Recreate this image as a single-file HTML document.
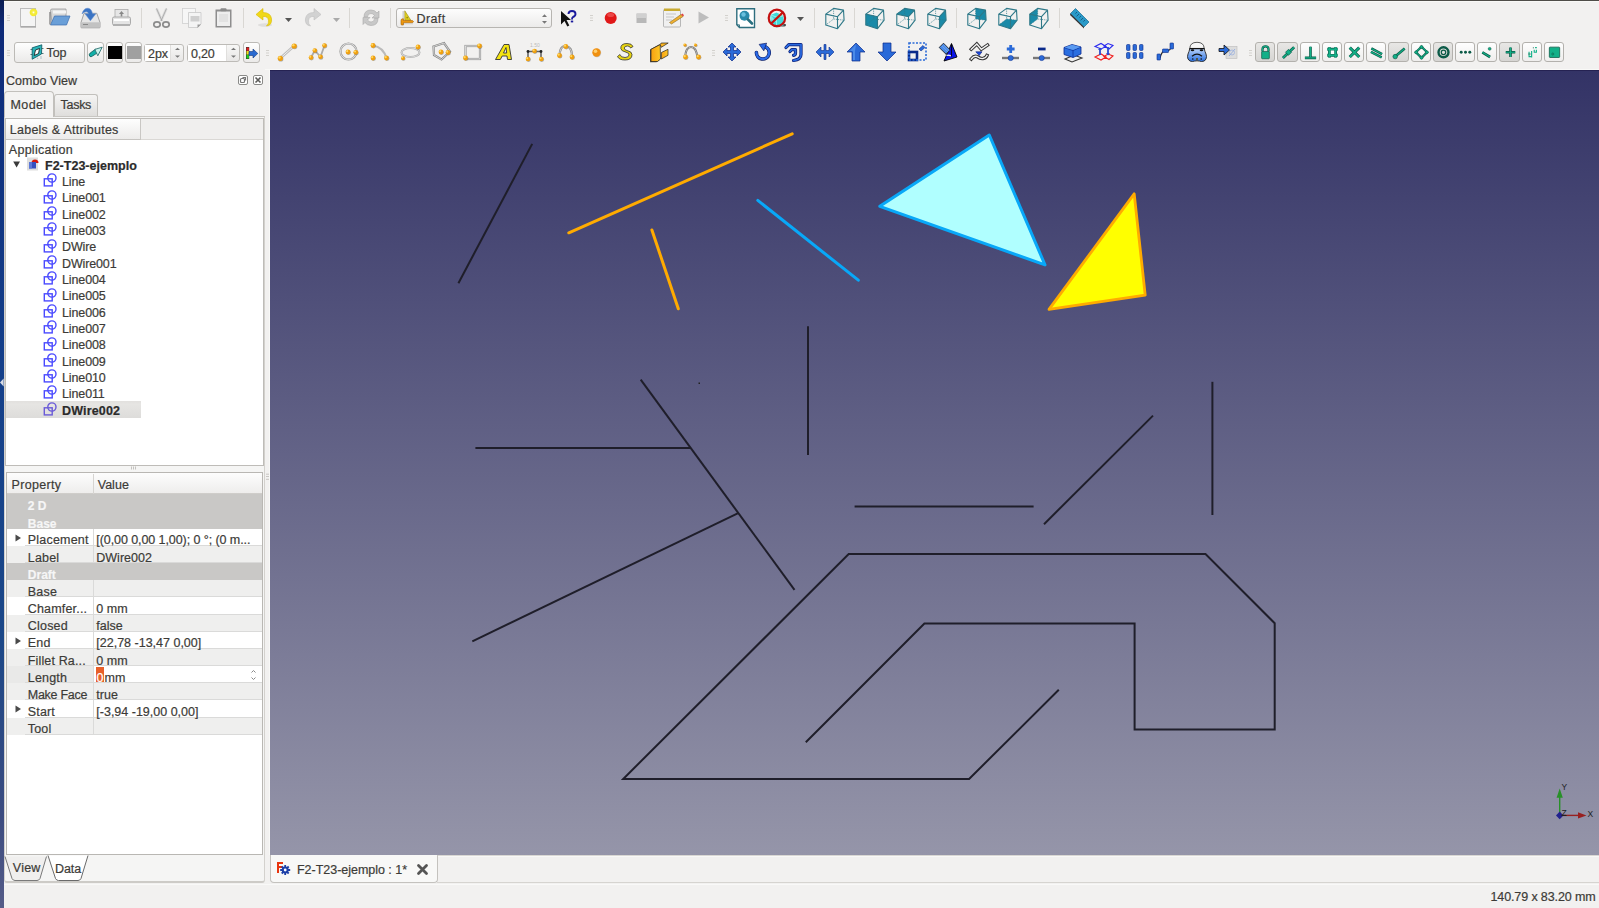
<!DOCTYPE html><html><head><meta charset="utf-8"><style>
*{margin:0;padding:0;box-sizing:border-box}
html,body{width:1599px;height:908px;overflow:hidden;background:#f2f1f0;font-family:"Liberation Sans",sans-serif;color:#3c3c3c;position:relative}
.ab{position:absolute}
.t{position:absolute;white-space:nowrap;-webkit-text-stroke:0.2px currentColor}
svg{position:absolute;overflow:visible}

</style></head><body>
<div class="ab" style="left:0;top:0;width:1599px;height:1px;background:#4f4d49"></div><div class="ab" style="left:4px;top:1px;width:1595px;height:1px;background:#f9f9f7"></div>
<div class="ab" style="left:0;top:0;width:4px;height:908px;background:linear-gradient(#0b1d52,#0e2a78 3%,#143f8a 40%,#1c4888 70%,#3c4c80 90%,#555c88)"></div>
<svg class="ab" style="left:0;top:378px" width="5" height="10"><path d="M3.6 0.5L0 4.5L3.6 8.5z" fill="#d8dce6"/></svg>
<div class="ab" style="left:270px;top:70px;width:1329px;height:785px;background:linear-gradient(#333366,#9595a9)"></div>
<div class="ab" style="left:270px;top:70px;width:1329px;height:1px;background:#252252"></div>
<svg class="ab" width="1599" height="908" style="left:0;top:0"><line x1="458.4" y1="283.2" x2="532.2" y2="143.9" stroke="#1f1e2a" stroke-width="2" stroke-linecap="butt"/><line x1="568.8" y1="232.8" x2="792.2" y2="133.8" stroke="#ffab00" stroke-width="3" stroke-linecap="round"/><line x1="651.9" y1="230" x2="678.3" y2="308.8" stroke="#ffab00" stroke-width="3" stroke-linecap="round"/><line x1="757.8" y1="200.4" x2="858.3" y2="280.2" stroke="#08a8f8" stroke-width="3" stroke-linecap="round"/><line x1="640.7" y1="379.7" x2="794.5" y2="589.8" stroke="#1f1e2a" stroke-width="2" stroke-linecap="butt"/><line x1="475.4" y1="448" x2="690.4" y2="448" stroke="#1f1e2a" stroke-width="2" stroke-linecap="butt"/><line x1="472.3" y1="641.4" x2="738.2" y2="513.1" stroke="#1f1e2a" stroke-width="2" stroke-linecap="butt"/><line x1="808" y1="326.2" x2="808" y2="454.9" stroke="#1f1e2a" stroke-width="2" stroke-linecap="butt"/><line x1="854.6" y1="506.5" x2="1033.6" y2="506.5" stroke="#1f1e2a" stroke-width="2" stroke-linecap="butt"/><line x1="1044" y1="524.2" x2="1153" y2="415.6" stroke="#1f1e2a" stroke-width="2" stroke-linecap="butt"/><line x1="1212.4" y1="381.8" x2="1212.4" y2="515" stroke="#1f1e2a" stroke-width="2" stroke-linecap="butt"/><rect x="698.5" y="382.5" width="1.5" height="1.5" fill="#222"/><polygon points="879.8,206.3 989.3,135 1045,264.9" fill="#b0ffff" stroke="#08a8f8" stroke-width="3" stroke-linejoin="round"/><polygon points="1134.2,193.8 1145.2,295.1 1049,309.4" fill="#ffff00" stroke="#ffab00" stroke-width="2.8" stroke-linejoin="round"/><polyline points="805.8,742.3 924.4,623.6 1134.6,623.6 1134.6,729.6 1274.7,729.6 1274.7,623.2 1205.5,554 848.7,554 623.2,779 969.1,779 1058.8,689.7" fill="none" stroke="#1f1e2a" stroke-width="2"/><line x1="1559.7" y1="813" x2="1559.7" y2="796" stroke="#289028" stroke-width="1.4"/><polygon points="1556.6,797.8 1562.8,797.8 1559.7,788.5" fill="#289028"/><line x1="1562" y1="815.4" x2="1580" y2="815.4" stroke="#982020" stroke-width="1.4"/><polygon points="1578,812.2 1578,818.6 1586.5,815.4" fill="#982020"/><polygon points="1559.7,811.6 1563.4,815.4 1559.7,819.2 1556,815.4" fill="#22228e"/><path d="M1562 815.4H1566" stroke="#111" stroke-width="1"/><text x="1561.6" y="789.5" font-size="8.5" fill="#222" font-family="Liberation Sans">Y</text><text x="1561.6" y="815.5" font-size="8.5" fill="#222" font-family="Liberation Sans">Z</text><text x="1587.6" y="816.5" font-size="8.5" fill="#222" font-family="Liberation Sans">X</text></svg>
<div class="ab" style="left:265px;top:69px;width:1334px;height:1px;background:#f9f9f7"></div>
<div class="ab" style="left:437px;top:855px;width:1162px;height:1px;background:#d9d7d3"></div><div class="ab" style="left:437px;top:856px;width:1162px;height:1px;background:#f8f8f7"></div>
<div class="ab" style="left:270px;top:855px;width:167.5px;height:28px;background:#f8f8f7;border:1px solid #c4c2be;border-top:none;border-radius:0 0 4px 4px"></div>
<svg class="ab" style="left:277px;top:862px" width="14" height="14"><path d="M0 0h6v2h-4v2h3v2h-3v5h-2z" fill="#e8350f"/><g transform="translate(8.2,8)"><circle r="3.4" fill="#1c3fa8"/><path d="M0-5v10M-5 0h10M-3.5-3.5l7 7M3.5-3.5l-7 7" stroke="#1c3fa8" stroke-width="1.8"/><circle r="1.4" fill="#fff"/></g></svg>
<div class="t" style="left:297.00px;top:863.92px;font-size:12.5px;line-height:12.5px;letter-spacing:-0.024px;font-weight:normal;color:#3c3b37;">F2-T23-ejemplo : 1*</div>
<svg class="ab" style="left:417px;top:864px" width="11" height="11"><path d="M1.5 1.5l8 8M9.5 1.5l-8 8" stroke="#555" stroke-width="2.8" stroke-linecap="round"/></svg>
<div class="ab" style="left:437px;top:882px;width:1162px;height:1px;background:#d6d4d0"></div><div class="ab" style="left:4px;top:884px;width:1595px;height:1px;background:#f9f9f8"></div>
<div class="t" style="left:1490.50px;top:890.92px;font-size:12.5px;line-height:12.5px;letter-spacing:-0.118px;font-weight:normal;color:#3c3b37;">140.79 x 83.20 mm</div>
<div class="t" style="left:6.00px;top:75.42px;font-size:12.5px;line-height:12.5px;letter-spacing:0.037px;font-weight:normal;color:#3c3b37;">Combo View</div>
<svg class="ab" style="left:238px;top:75px" width="26" height="11"><rect x="0.5" y="0.5" width="9" height="9" rx="1.5" fill="#fff" stroke="#8a8a88"/><rect x="2.5" y="3.5" width="4" height="4" rx="1" fill="none" stroke="#777" stroke-width="1.2"/><path d="M4.5 2.5h3v3" fill="none" stroke="#777" stroke-width="1.2"/><rect x="15.5" y="0.5" width="9" height="9" rx="1.5" fill="#fff" stroke="#8a8a88"/><path d="M17.5 2.5l5 5M22.5 2.5l-5 5" stroke="#5a5a58" stroke-width="1.6"/></svg>
<div class="ab" style="left:54px;top:94px;width:44px;height:23px;background:linear-gradient(#f5f4f3,#dedddb);border:1px solid #c2c0bc;border-bottom:none;border-radius:3px 3px 0 0"></div>
<div class="ab" style="left:4px;top:91px;width:50px;height:27px;background:#f4f3f2;border:1px solid #c2c0bc;border-bottom:none;border-radius:4px 4px 0 0"></div>
<div class="ab" style="left:54px;top:116px;width:211px;height:1px;background:#c8c6c2"></div>
<div class="t" style="left:10.50px;top:99.42px;font-size:12.5px;line-height:12.5px;letter-spacing:0.391px;font-weight:normal;color:#3c3b37;">Model</div>
<div class="t" style="left:60.50px;top:98.62px;font-size:12.5px;line-height:12.5px;letter-spacing:-0.270px;font-weight:normal;color:#3c3b37;">Tasks</div>
<div class="ab" style="left:4px;top:117px;width:261px;height:766px;border:1px solid #d3d1cd;border-top:none;border-bottom:2px solid #cdcbc7;border-radius:0 0 3px 3px;background:#f5f5f4"></div>
<div class="ab" style="left:5px;top:118px;width:259px;height:348px;background:#fff;border:1px solid #bebcb8"></div>
<div class="ab" style="left:6px;top:119px;width:257px;height:21px;background:#f0efee;border-bottom:1px solid #dad8d5"></div>
<div class="ab" style="left:6px;top:119px;width:135px;height:21px;background:linear-gradient(#fefefe,#ecebea);border-right:1px solid #c9c7c4;border-bottom:1px solid #c6c4c1"></div>
<div class="t" style="left:9.80px;top:124.42px;font-size:12.5px;line-height:12.5px;letter-spacing:0.241px;font-weight:normal;color:#3c3b37;">Labels &amp; Attributes</div>
<div class="t" style="left:8.80px;top:144.02px;font-size:12.5px;line-height:12.5px;letter-spacing:0.277px;font-weight:normal;color:#3c3b37;">Application</div>
<svg class="ab" style="left:13px;top:161px" width="8" height="7"><path d="M0.2 0.6h6.8l-3.4 5.8z" fill="#3a3a3a"/></svg>
<svg class="ab" style="left:27px;top:157px" width="12" height="14"><rect x="0" y="0.5" width="11" height="13" fill="#dedede"/><path d="M4.5 6a3.5 3.5 0 0 1 7 0z" fill="#d8180e"/><rect x="2" y="5" width="7" height="6.5" fill="#3650c0"/><rect x="2" y="5" width="3" height="6.5" fill="#5c78d8"/></svg>
<div class="t" style="left:45.00px;top:160.42px;font-size:12.5px;line-height:12.5px;letter-spacing:0.009px;font-weight:bold;color:#2b2b2b;">F2-T23-ejemplo</div>
<div class="t" style="left:62.00px;top:176.12px;font-size:12.5px;line-height:12.5px;letter-spacing:-0.117px;font-weight:normal;color:#3c3b37;">Line</div>
<svg class="ab" style="left:43px;top:173.20px" width="15" height="15"><rect x="1.3" y="5.8" width="7.9" height="7.1" fill="none" stroke="#4a4aff" stroke-width="1.4"/><circle cx="8.9" cy="5" r="4.1" fill="none" stroke="#4a4aff" stroke-width="1.4"/></svg>
<div class="t" style="left:62.00px;top:192.45px;font-size:12.5px;line-height:12.5px;letter-spacing:-0.126px;font-weight:normal;color:#3c3b37;">Line001</div>
<svg class="ab" style="left:43px;top:189.53px" width="15" height="15"><rect x="1.3" y="5.8" width="7.9" height="7.1" fill="none" stroke="#4a4aff" stroke-width="1.4"/><circle cx="8.9" cy="5" r="4.1" fill="none" stroke="#4a4aff" stroke-width="1.4"/></svg>
<div class="t" style="left:62.00px;top:208.78px;font-size:12.5px;line-height:12.5px;letter-spacing:-0.126px;font-weight:normal;color:#3c3b37;">Line002</div>
<svg class="ab" style="left:43px;top:205.86px" width="15" height="15"><rect x="1.3" y="5.8" width="7.9" height="7.1" fill="none" stroke="#4a4aff" stroke-width="1.4"/><circle cx="8.9" cy="5" r="4.1" fill="none" stroke="#4a4aff" stroke-width="1.4"/></svg>
<div class="t" style="left:62.00px;top:225.11px;font-size:12.5px;line-height:12.5px;letter-spacing:-0.126px;font-weight:normal;color:#3c3b37;">Line003</div>
<svg class="ab" style="left:43px;top:222.19px" width="15" height="15"><rect x="1.3" y="5.8" width="7.9" height="7.1" fill="none" stroke="#4a4aff" stroke-width="1.4"/><circle cx="8.9" cy="5" r="4.1" fill="none" stroke="#4a4aff" stroke-width="1.4"/></svg>
<div class="t" style="left:62.00px;top:241.44px;font-size:12.5px;line-height:12.5px;letter-spacing:-0.138px;font-weight:normal;color:#3c3b37;">DWire</div>
<svg class="ab" style="left:43px;top:238.52px" width="15" height="15"><rect x="1.3" y="5.8" width="7.9" height="7.1" fill="none" stroke="#4a4aff" stroke-width="1.4"/><circle cx="8.9" cy="5" r="4.1" fill="none" stroke="#4a4aff" stroke-width="1.4"/></svg>
<div class="t" style="left:62.00px;top:257.77px;font-size:12.5px;line-height:12.5px;letter-spacing:-0.138px;font-weight:normal;color:#3c3b37;">DWire001</div>
<svg class="ab" style="left:43px;top:254.85px" width="15" height="15"><rect x="1.3" y="5.8" width="7.9" height="7.1" fill="none" stroke="#4a4aff" stroke-width="1.4"/><circle cx="8.9" cy="5" r="4.1" fill="none" stroke="#4a4aff" stroke-width="1.4"/></svg>
<div class="t" style="left:62.00px;top:274.10px;font-size:12.5px;line-height:12.5px;letter-spacing:-0.126px;font-weight:normal;color:#3c3b37;">Line004</div>
<svg class="ab" style="left:43px;top:271.18px" width="15" height="15"><rect x="1.3" y="5.8" width="7.9" height="7.1" fill="none" stroke="#4a4aff" stroke-width="1.4"/><circle cx="8.9" cy="5" r="4.1" fill="none" stroke="#4a4aff" stroke-width="1.4"/></svg>
<div class="t" style="left:62.00px;top:290.43px;font-size:12.5px;line-height:12.5px;letter-spacing:-0.126px;font-weight:normal;color:#3c3b37;">Line005</div>
<svg class="ab" style="left:43px;top:287.51px" width="15" height="15"><rect x="1.3" y="5.8" width="7.9" height="7.1" fill="none" stroke="#4a4aff" stroke-width="1.4"/><circle cx="8.9" cy="5" r="4.1" fill="none" stroke="#4a4aff" stroke-width="1.4"/></svg>
<div class="t" style="left:62.00px;top:306.76px;font-size:12.5px;line-height:12.5px;letter-spacing:-0.126px;font-weight:normal;color:#3c3b37;">Line006</div>
<svg class="ab" style="left:43px;top:303.84px" width="15" height="15"><rect x="1.3" y="5.8" width="7.9" height="7.1" fill="none" stroke="#4a4aff" stroke-width="1.4"/><circle cx="8.9" cy="5" r="4.1" fill="none" stroke="#4a4aff" stroke-width="1.4"/></svg>
<div class="t" style="left:62.00px;top:323.09px;font-size:12.5px;line-height:12.5px;letter-spacing:-0.126px;font-weight:normal;color:#3c3b37;">Line007</div>
<svg class="ab" style="left:43px;top:320.17px" width="15" height="15"><rect x="1.3" y="5.8" width="7.9" height="7.1" fill="none" stroke="#4a4aff" stroke-width="1.4"/><circle cx="8.9" cy="5" r="4.1" fill="none" stroke="#4a4aff" stroke-width="1.4"/></svg>
<div class="t" style="left:62.00px;top:339.42px;font-size:12.5px;line-height:12.5px;letter-spacing:-0.126px;font-weight:normal;color:#3c3b37;">Line008</div>
<svg class="ab" style="left:43px;top:336.50px" width="15" height="15"><rect x="1.3" y="5.8" width="7.9" height="7.1" fill="none" stroke="#4a4aff" stroke-width="1.4"/><circle cx="8.9" cy="5" r="4.1" fill="none" stroke="#4a4aff" stroke-width="1.4"/></svg>
<div class="t" style="left:62.00px;top:355.75px;font-size:12.5px;line-height:12.5px;letter-spacing:-0.126px;font-weight:normal;color:#3c3b37;">Line009</div>
<svg class="ab" style="left:43px;top:352.83px" width="15" height="15"><rect x="1.3" y="5.8" width="7.9" height="7.1" fill="none" stroke="#4a4aff" stroke-width="1.4"/><circle cx="8.9" cy="5" r="4.1" fill="none" stroke="#4a4aff" stroke-width="1.4"/></svg>
<div class="t" style="left:62.00px;top:372.08px;font-size:12.5px;line-height:12.5px;letter-spacing:-0.126px;font-weight:normal;color:#3c3b37;">Line010</div>
<svg class="ab" style="left:43px;top:369.16px" width="15" height="15"><rect x="1.3" y="5.8" width="7.9" height="7.1" fill="none" stroke="#4a4aff" stroke-width="1.4"/><circle cx="8.9" cy="5" r="4.1" fill="none" stroke="#4a4aff" stroke-width="1.4"/></svg>
<div class="t" style="left:62.00px;top:388.41px;font-size:12.5px;line-height:12.5px;letter-spacing:-0.124px;font-weight:normal;color:#3c3b37;">Line011</div>
<svg class="ab" style="left:43px;top:385.49px" width="15" height="15"><rect x="1.3" y="5.8" width="7.9" height="7.1" fill="none" stroke="#4a4aff" stroke-width="1.4"/><circle cx="8.9" cy="5" r="4.1" fill="none" stroke="#4a4aff" stroke-width="1.4"/></svg>
<div class="ab" style="left:6px;top:401px;width:135px;height:17px;background:linear-gradient(#e2e0de,#e6e5e3 20%,#dddcda)"></div>
<div class="t" style="left:62.00px;top:404.74px;font-size:12.5px;line-height:12.5px;letter-spacing:0.168px;font-weight:bold;color:#2b2b2b;">DWire002</div>
<svg class="ab" style="left:43px;top:401.82px" width="15" height="15"><rect x="1.3" y="5.8" width="7.9" height="7.1" fill="none" stroke="#6a5ad8" stroke-width="1.4"/><circle cx="8.9" cy="5" r="4.1" fill="none" stroke="#6a5ad8" stroke-width="1.4"/></svg>
<svg class="ab" style="left:266px;top:473px" width="4" height="8"><path d="M0 1.2h3M0 3.5h3M0 6.3h3" stroke="#c8c6c2" stroke-width="1"/></svg>
<div class="ab" style="left:269px;top:70px;width:1px;height:785px;background:#f8f8f6"></div>
<svg class="ab" style="left:130px;top:466px" width="8" height="5"><path d="M1.5 0.5v3M3.5 0.5v3M5.5 0.5v3" stroke="#c4c2bf" stroke-width="1"/></svg>
<div class="ab" style="left:6px;top:472px;width:257px;height:383px;background:#fff;border:1px solid #b9b7b3"></div>
<div class="ab" style="left:7px;top:473px;width:255px;height:21.4px;background:linear-gradient(#fdfdfd,#eeedec);border-bottom:1px solid #cfcdca"></div>
<div class="ab" style="left:93px;top:474px;width:1px;height:20px;background:#d6d4d1"></div>
<div class="t" style="left:11.60px;top:479.42px;font-size:12.5px;line-height:12.5px;letter-spacing:0.308px;font-weight:normal;color:#3c3b37;">Property</div>
<div class="t" style="left:97.70px;top:479.42px;font-size:12.5px;line-height:12.5px;letter-spacing:0.032px;font-weight:normal;color:#3c3b37;">Value</div>
<div class="ab" style="left:7px;top:494px;width:255px;height:17px;background:#c9c8c6"></div>
<div class="ab" style="left:7px;top:511px;width:255px;height:18px;background:#c9c8c6"></div>
<div class="ab" style="left:7px;top:529px;width:255px;height:17px;background:#ffffff"></div>
<div class="ab" style="left:7px;top:546px;width:255px;height:17px;background:#efefee"></div>
<div class="ab" style="left:7px;top:563px;width:255px;height:17px;background:#c9c8c6"></div>
<div class="ab" style="left:7px;top:580px;width:255px;height:17px;background:#efefee"></div>
<div class="ab" style="left:7px;top:597px;width:255px;height:18px;background:#ffffff"></div>
<div class="ab" style="left:7px;top:615px;width:255px;height:17px;background:#efefee"></div>
<div class="ab" style="left:7px;top:632px;width:255px;height:17px;background:#ffffff"></div>
<div class="ab" style="left:7px;top:649px;width:255px;height:17px;background:#efefee"></div>
<div class="ab" style="left:7px;top:666px;width:255px;height:17px;background:#e9e9e8"></div>
<div class="ab" style="left:94px;top:666px;width:168px;height:17px;background:#fff"></div>
<div class="ab" style="left:7px;top:683px;width:255px;height:17px;background:#efefee"></div>
<div class="ab" style="left:7px;top:700px;width:255px;height:18px;background:#ffffff"></div>
<div class="ab" style="left:7px;top:718px;width:255px;height:17px;background:#efefee"></div>
<div class="ab" style="left:25px;top:545px;width:237px;height:1px;background:#dadad9"></div>
<div class="ab" style="left:93px;top:529px;width:1px;height:17px;background:#dadad9"></div>
<div class="ab" style="left:25px;top:562px;width:237px;height:1px;background:#dadad9"></div>
<div class="ab" style="left:93px;top:546px;width:1px;height:17px;background:#dadad9"></div>
<div class="ab" style="left:25px;top:596px;width:237px;height:1px;background:#dadad9"></div>
<div class="ab" style="left:93px;top:580px;width:1px;height:17px;background:#dadad9"></div>
<div class="ab" style="left:25px;top:614px;width:237px;height:1px;background:#dadad9"></div>
<div class="ab" style="left:93px;top:597px;width:1px;height:18px;background:#dadad9"></div>
<div class="ab" style="left:25px;top:631px;width:237px;height:1px;background:#dadad9"></div>
<div class="ab" style="left:93px;top:615px;width:1px;height:17px;background:#dadad9"></div>
<div class="ab" style="left:25px;top:648px;width:237px;height:1px;background:#dadad9"></div>
<div class="ab" style="left:93px;top:632px;width:1px;height:17px;background:#dadad9"></div>
<div class="ab" style="left:25px;top:665px;width:237px;height:1px;background:#dadad9"></div>
<div class="ab" style="left:93px;top:649px;width:1px;height:17px;background:#dadad9"></div>
<div class="ab" style="left:25px;top:682px;width:237px;height:1px;background:#dadad9"></div>
<div class="ab" style="left:93px;top:666px;width:1px;height:17px;background:#dadad9"></div>
<div class="ab" style="left:25px;top:699px;width:237px;height:1px;background:#dadad9"></div>
<div class="ab" style="left:93px;top:683px;width:1px;height:17px;background:#dadad9"></div>
<div class="ab" style="left:25px;top:717px;width:237px;height:1px;background:#dadad9"></div>
<div class="ab" style="left:93px;top:700px;width:1px;height:18px;background:#dadad9"></div>
<div class="ab" style="left:25px;top:734px;width:237px;height:1px;background:#dadad9"></div>
<div class="ab" style="left:93px;top:718px;width:1px;height:17px;background:#dadad9"></div>
<div class="t" style="left:27.80px;top:500.34px;font-size:12px;line-height:12px;letter-spacing:0.000px;font-weight:bold;color:#f6f6f6;">2 D</div>
<div class="t" style="left:27.80px;top:517.52px;font-size:12px;line-height:12px;letter-spacing:0.000px;font-weight:bold;color:#f6f6f6;">Base</div>
<svg class="ab" style="left:15px;top:533.66px" width="7" height="8"><path d="M0.5 0.5l5.5 3.5l-5.5 3.5z" fill="#4a4a4a"/></svg>
<div class="t" style="left:27.80px;top:534.38px;font-size:12.5px;line-height:12.5px;letter-spacing:0.197px;font-weight:normal;color:#3c3b37;">Placement</div>
<div class="t" style="left:96.30px;top:534.38px;font-size:12.5px;line-height:12.5px;letter-spacing:-0.079px;font-weight:normal;color:#3c3b37;">[(0,00 0,00 1,00); 0 °; (0 m...</div>
<div class="t" style="left:27.80px;top:551.56px;font-size:12.5px;line-height:12.5px;letter-spacing:0.183px;font-weight:normal;color:#3c3b37;">Label</div>
<div class="t" style="left:96.30px;top:551.56px;font-size:12.5px;line-height:12.5px;letter-spacing:0.000px;font-weight:normal;color:#3c3b37;">DWire002</div>
<div class="t" style="left:27.80px;top:569.06px;font-size:12px;line-height:12px;letter-spacing:0.000px;font-weight:bold;color:#f6f6f6;">Draft</div>
<div class="t" style="left:27.80px;top:585.92px;font-size:12.5px;line-height:12.5px;letter-spacing:0.214px;font-weight:normal;color:#3c3b37;">Base</div>
<div class="t" style="left:27.80px;top:603.10px;font-size:12.5px;line-height:12.5px;letter-spacing:0.173px;font-weight:normal;color:#3c3b37;">Chamfer...</div>
<div class="t" style="left:96.30px;top:603.10px;font-size:12.5px;line-height:12.5px;letter-spacing:0.000px;font-weight:normal;color:#3c3b37;">0 mm</div>
<div class="t" style="left:27.80px;top:620.28px;font-size:12.5px;line-height:12.5px;letter-spacing:0.195px;font-weight:normal;color:#3c3b37;">Closed</div>
<div class="t" style="left:96.30px;top:620.28px;font-size:12.5px;line-height:12.5px;letter-spacing:0.000px;font-weight:normal;color:#3c3b37;">false</div>
<svg class="ab" style="left:15px;top:636.74px" width="7" height="8"><path d="M0.5 0.5l5.5 3.5l-5.5 3.5z" fill="#4a4a4a"/></svg>
<div class="t" style="left:27.80px;top:637.46px;font-size:12.5px;line-height:12.5px;letter-spacing:0.222px;font-weight:normal;color:#3c3b37;">End</div>
<div class="t" style="left:96.30px;top:637.46px;font-size:12.5px;line-height:12.5px;letter-spacing:0.000px;font-weight:normal;color:#3c3b37;">[22,78 -13,47 0,00]</div>
<div class="t" style="left:27.80px;top:654.64px;font-size:12.5px;line-height:12.5px;letter-spacing:0.141px;font-weight:normal;color:#3c3b37;">Fillet Ra...</div>
<div class="t" style="left:96.30px;top:654.64px;font-size:12.5px;line-height:12.5px;letter-spacing:0.000px;font-weight:normal;color:#3c3b37;">0 mm</div>
<div class="t" style="left:27.80px;top:671.82px;font-size:12.5px;line-height:12.5px;letter-spacing:0.191px;font-weight:normal;color:#3c3b37;">Length</div>
<div class="ab" style="left:96px;top:667px;width:8px;height:15px;background:#e8602a"></div>
<div class="t" style="left:96.60px;top:671.82px;font-size:12.5px;line-height:12.5px;letter-spacing:0.000px;font-weight:normal;color:#fff;">0</div>
<div class="t" style="left:104.50px;top:671.82px;font-size:12.5px;line-height:12.5px;letter-spacing:0.000px;font-weight:normal;color:#3c3b37;">mm</div>
<svg class="ab" style="left:250px;top:669.10px" width="7" height="12"><path d="M1.5 3.5l2-2l2 2M1.5 8.5l2 2l2-2" fill="none" stroke="#888" stroke-width="1"/></svg>
<div class="t" style="left:27.80px;top:689.00px;font-size:12.5px;line-height:12.5px;letter-spacing:-0.275px;font-weight:normal;color:#3c3b37;">Make Face</div>
<div class="t" style="left:96.30px;top:689.00px;font-size:12.5px;line-height:12.5px;letter-spacing:0.000px;font-weight:normal;color:#3c3b37;">true</div>
<svg class="ab" style="left:15px;top:705.46px" width="7" height="8"><path d="M0.5 0.5l5.5 3.5l-5.5 3.5z" fill="#4a4a4a"/></svg>
<div class="t" style="left:27.80px;top:706.18px;font-size:12.5px;line-height:12.5px;letter-spacing:0.158px;font-weight:normal;color:#3c3b37;">Start</div>
<div class="t" style="left:96.30px;top:706.18px;font-size:12.5px;line-height:12.5px;letter-spacing:0.000px;font-weight:normal;color:#3c3b37;">[-3,94 -19,00 0,00]</div>
<div class="t" style="left:27.80px;top:723.36px;font-size:12.5px;line-height:12.5px;letter-spacing:0.172px;font-weight:normal;color:#3c3b37;">Tool</div>
<svg class="ab" style="left:0px;top:853px" width="100" height="32"><path d="M5 3.5L12 25.5Q13 27.5 15 27.5H37Q39 27.5 40 25.5L46.5 3.5" fill="#f0efee" stroke="#7a7a7a" stroke-width="1"/><path d="M48 2.5L55.5 25.5Q56.5 27.5 58.5 27.5H78Q80 27.5 81 25.5L88 2.5" fill="#ffffff" stroke="#6a6a6a" stroke-width="1"/></svg>
<div class="t" style="left:12.80px;top:862.02px;font-size:12.5px;line-height:12.5px;letter-spacing:0.233px;font-weight:normal;color:#3c3b37;">View</div>
<div class="t" style="left:55.00px;top:863.02px;font-size:12.5px;line-height:12.5px;letter-spacing:-0.101px;font-weight:normal;color:#3c3b37;">Data</div>
<svg class="ab" style="left:7px;top:15px" width="5" height="9"><path d="M0 0.5h3M0 3h3M0 5.5h3" stroke="#d3d1cd" stroke-width="1"/></svg>
<svg class="ab" style="left:20px;top:8px" width="22" height="22" viewBox="0 0 22 22"><rect x="0.5" y="0.5" width="15" height="18.5" fill="#f4f4f4" stroke="#bdbdbd"/><rect x="1" y="18" width="15" height="1.5" fill="#aaa"/><defs><radialGradient id="gstar"><stop offset="0" stop-color="#fffef0"/><stop offset="0.35" stop-color="#f6ee40"/><stop offset="0.75" stop-color="#f2e830"/><stop offset="1" stop-color="#f2e830" stop-opacity="0"/></radialGradient></defs><circle cx="13.5" cy="4.4" r="4.4" fill="url(#gstar)"/></svg>
<svg class="ab" style="left:49px;top:8px" width="22" height="22" viewBox="0 0 22 22"><path d="M1.5 2.5 Q1.5 1 3 1h14v14H3z" fill="#d8d8d8" stroke="#9a9a9a" stroke-width="0.8"/><rect x="4" y="2.5" width="13" height="3" fill="#f4f4f4"/><path d="M1.5 17L5.5 8H21L17.5 17z" fill="#6a9fd8" stroke="#3c6fb0" stroke-width="0.7"/><path d="M1 16.5V4" stroke="#777" stroke-width="1.2"/></svg>
<svg class="ab" style="left:78px;top:5px" width="25" height="25" viewBox="0 0 25 25"><path d="M6 8.3H18.8L22 17.5V22.3Q22 22.8 21.5 22.8H3.5Q3 22.8 3 22.3V17.5z" fill="#e6e6e6" stroke="#9a9a9a" stroke-width="0.9"/><rect x="3.5" y="17.3" width="18" height="5" fill="#c2c2c2"/><path d="M5 19.5H10" stroke="#888" stroke-width="1"/><path d="M4 9Q5.5 3 10 3.2Q13.5 3.5 14.5 8.8H17.8L12.4 15.8L7 8.8H10.6Q10 6.5 8 6.8Q5.5 7 4 9z" fill="#3a74c4" stroke="#5a8ad0" stroke-width="0.5"/></svg>
<svg class="ab" style="left:112px;top:9px" width="22" height="22" viewBox="0 0 22 22"><rect x="3" y="0.5" width="13" height="8" fill="#e6e6e6" stroke="#aaa" stroke-width="0.8"/><path d="M9.5 2L7 5h5z" fill="#888"/><rect x="8.7" y="4.5" width="1.6" height="3" fill="#888"/><rect x="0.5" y="8" width="18" height="8" rx="1.5" fill="#e4e4e4" stroke="#9a9a9a" stroke-width="0.8"/><rect x="2" y="10" width="15" height="2" fill="#fff"/><rect x="1" y="15" width="17" height="2" fill="#b0b0b0"/></svg>
<div class="ab" style="left:141px;top:8px;width:1px;height:20px;background:#d9d7d3"></div>
<svg class="ab" style="left:153px;top:8px" width="22" height="22" viewBox="0 0 22 22"><path d="M3.5 0.5L9 13M13.5 0.5L8 13" stroke="#dcdcdc" stroke-width="2.6"/><path d="M3.5 0.5L9 13M13.5 0.5L8 13" stroke="#9a9a9a" stroke-width="0.7" fill="none"/><ellipse cx="4" cy="16.5" rx="3.2" ry="2.6" fill="none" stroke="#8c8c8c" stroke-width="1.7"/><ellipse cx="13" cy="16.5" rx="3.2" ry="2.6" fill="none" stroke="#8c8c8c" stroke-width="1.7"/></svg>
<svg class="ab" style="left:182px;top:8px" width="22" height="22" viewBox="0 0 22 22"><rect x="0.5" y="0.5" width="13" height="15" fill="#f6f6f6" stroke="#d0d0d0" stroke-width="0.8"/><path d="M6.5 4.5h12.5v11.5l-3.5 3.5h-9z" fill="#f4f4f4" stroke="#c8c8c8" stroke-width="0.8"/><rect x="8.5" y="8" width="9" height="5.5" fill="#cfcfcf"/><path d="M15.5 20v-3.5h3.5" fill="#999"/></svg>
<svg class="ab" style="left:215px;top:8px" width="22" height="22" viewBox="0 0 22 22"><rect x="0.5" y="1.5" width="16" height="18" fill="#8e8e8e"/><rect x="2" y="3.5" width="13" height="14.5" fill="#eeeeee"/><rect x="5.5" y="0.3" width="6" height="3" rx="1" fill="#8a8a8a"/><rect x="4" y="6" width="9" height="8" fill="#e2e2e2"/></svg>
<div class="ab" style="left:243px;top:8px;width:1px;height:20px;background:#d9d7d3"></div>
<svg class="ab" style="left:256px;top:8px" width="22" height="22" viewBox="0 0 22 22"><ellipse cx="9" cy="17" rx="7" ry="1.8" fill="#000" opacity="0.08"/><path d="M7 0.5L0 6.5L7 12V8.5Q12 8 12.5 12.5Q13 16 10.5 18Q16.5 17 15.5 10.5Q14.5 4.5 7 4.5z" fill="#f0d818" stroke="#d8b800" stroke-width="0.6"/></svg>
<svg class="ab" style="left:285px;top:17.5px" width="8" height="5" viewBox="0 0 8 5"><path d="M0 0h7l-3.5 4z" fill="#555"/></svg>
<svg class="ab" style="left:305px;top:8px" width="22" height="22" viewBox="0 0 22 22"><path d="M9 0.5L16 6.5L9 12V8.5Q4 8 3.5 12.5Q3 16 5.5 18Q-0.5 17 0.5 10.5Q1.5 4.5 9 4.5z" fill="#d2d2d2" stroke="#c0c0c0" stroke-width="0.6"/></svg>
<svg class="ab" style="left:333px;top:17.5px" width="8" height="5" viewBox="0 0 8 5"><path d="M0 0h7l-3.5 4z" fill="#aaa"/></svg>
<div class="ab" style="left:349px;top:8px;width:1px;height:20px;background:#d9d7d3"></div>
<svg class="ab" style="left:362px;top:8px" width="22" height="22" viewBox="0 0 22 22"><path d="M2 9Q2 2 9 2Q13 2 15 5L17 3V10H10L12.5 7.5Q11 5.5 9 5.5Q5.5 5.5 5.5 9z" fill="#c8c8c8" stroke="#aaa" stroke-width="0.6"/><path d="M16 10.5Q16 17.5 9 17.5Q5 17.5 3 14.5L1 16.5V9.5H8L5.5 12Q7 14 9 14Q12.5 14 12.5 10.5z" fill="#c8c8c8" stroke="#aaa" stroke-width="0.6"/></svg>
<div class="ab" style="left:390px;top:8px;width:1px;height:20px;background:#d9d7d3"></div>
<div class="ab" style="left:396px;top:8px;width:156px;height:20px;border:1px solid #b7b5b1;border-radius:3px;background:linear-gradient(#fdfdfd,#ecebea)"></div>
<svg class="ab" style="left:400px;top:10px" width="17" height="17" viewBox="0 0 17 17"><path d="M3.2 1V14" stroke="#cfcfcf" stroke-width="1.4"/><path d="M4.8 0.8L10.8 10.2H4.8z" fill="#e0d020" stroke="#9a8a10" stroke-width="0.6"/><circle cx="7.2" cy="7.6" r="0.9" fill="#9a8a10"/><path d="M1 10.5Q1 8.8 2.6 8.8H3.4V10.6H12.5L13.5 11.5L12.5 12.8H3.4V15H1.8Q1 15 1 14z" fill="#f09a10" stroke="#a05a00" stroke-width="0.6"/><path d="M4 13.8H13" stroke="#ccc" stroke-width="0.8"/></svg>
<div class="t" style="left:416.50px;top:12.72px;font-size:12.5px;line-height:12.5px;letter-spacing:0.383px;font-weight:normal;color:#3c3b37;">Draft</div>
<svg class="ab" style="left:541px;top:13px" width="8" height="12" viewBox="0 0 8 12"><path d="M1 4L3.5 1.2L6 4z" fill="#777"/><path d="M1 8L3.5 10.8L6 8z" fill="#777"/></svg>
<svg class="ab" style="left:560px;top:10px" width="18" height="18" viewBox="0 0 18 18"><path d="M1 1V14.5L4.5 11L7.3 16.5L9.3 15.5L6.5 10H11z" fill="#111"/><path d="M8.5 4Q8.5 1 12 1Q15.5 1 15.5 4Q15.5 6 13 7Q12 7.6 12 9.5" fill="none" stroke="#1a1a9c" stroke-width="1.9"/><rect x="10.8" y="10.6" width="2.4" height="1.8" fill="#1a1a9c"/></svg>
<svg class="ab" style="left:590px;top:15px" width="5" height="9"><path d="M0 0.5h3M0 3h3M0 5.5h3" stroke="#d3d1cd" stroke-width="1"/></svg>
<svg class="ab" style="left:604px;top:11px" width="14" height="14" viewBox="0 0 14 14"><circle cx="6.7" cy="6.9" r="6" fill="#e01818"/><ellipse cx="6.7" cy="4" rx="3.5" ry="2" fill="#f26868" opacity="0.6"/></svg>
<svg class="ab" style="left:636px;top:13px" width="12" height="12" viewBox="0 0 12 12"><rect x="0.5" y="0.5" width="10" height="9.5" fill="#b8b8b8"/><rect x="1" y="1" width="9" height="4" fill="#d0d0d0"/></svg>
<svg class="ab" style="left:663px;top:8px" width="22" height="22" viewBox="0 0 22 22"><rect x="0.5" y="1.5" width="17" height="17.5" rx="1" fill="#f0f0f0" stroke="#a8a8a8" stroke-width="0.8"/><rect x="1" y="0.5" width="16" height="2.5" fill="#c8aa30"/><path d="M3 6h10M3 9h8M3 12h6" stroke="#bbb" stroke-width="0.8"/><path d="M6.5 14.5L18 6.5L20 8.5L8.5 16z" fill="#f0b030" stroke="#8a6a20" stroke-width="0.6"/><path d="M18 6.5L19.5 5.5L21 7.2L20 8.5z" fill="#e04040"/></svg>
<svg class="ab" style="left:698px;top:11px" width="13" height="14" viewBox="0 0 13 14"><path d="M0.5 0.5L11 6.5L0.5 12.5z" fill="#bdbdbd"/></svg>
<svg class="ab" style="left:725px;top:15px" width="5" height="9"><path d="M0 0.5h3M0 3h3M0 5.5h3" stroke="#d3d1cd" stroke-width="1"/></svg>
<svg class="ab" style="left:736px;top:8px" width="22" height="22" viewBox="0 0 22 22"><path d="M0.8 0.8H18.5V19.5H3.5L0.8 16.8z" fill="#fff" stroke="#2e6e7e" stroke-width="1.4"/><path d="M0.8 16.8h2.7v2.7" fill="none" stroke="#2e6e7e" stroke-width="0.9"/><circle cx="8.5" cy="7.8" r="5" fill="#2a8aaa"/><circle cx="7.5" cy="6.5" r="2.2" fill="#6ac0de"/><path d="M12 11.5L16 15.5" stroke="#2a7080" stroke-width="2.6" stroke-linecap="round"/></svg>
<svg class="ab" style="left:767px;top:8px" width="22" height="22" viewBox="0 0 22 22"><ellipse cx="16" cy="17" rx="3" ry="1.5" fill="#222" opacity="0.8"/><path d="M3.5 7L9.5 4.5L16.5 8V17.5L9.5 19.5L3.5 16z" fill="#40dada"/><path d="M3.5 7L9.5 9L16.5 8M9.5 9V19.5" stroke="#a8f0f0" stroke-width="0.8" fill="none"/><path d="M3.5 7V12L9.5 14" fill="#b8f4f4" opacity="0.6"/><path d="M10 10L16 4" stroke="#f0d820" stroke-width="1.8"/><circle cx="9.9" cy="9.9" r="8.2" fill="none" stroke="#c41010" stroke-width="2.2"/><path d="M4.2 15.5L15.8 4.5" stroke="#c41010" stroke-width="2.2"/></svg>
<svg class="ab" style="left:797px;top:17px" width="8" height="5" viewBox="0 0 8 5"><path d="M0 0h7l-3.5 4z" fill="#555"/></svg>
<div class="ab" style="left:814px;top:8px;width:1px;height:20px;background:#d9d7d3"></div>
<svg class="ab" style="left:825px;top:8px" width="21" height="22" viewBox="0 0 21 22"><g transform="translate(0.5,0.5)"><g fill="none" stroke="#2e7888" stroke-width="1.1" stroke-linejoin="round"><polygon points="0.3,5.6 8.1,-0.1 18,1.6 18.6,11.7 12,20.2 0.3,16.5"/><path d="M0.3 5.6L12 8.2L18 1.6M12 8.2V20.2"/></g><path d="M8.1 -0.1V10.5L0.3 16.5M8.1 10.5L18.6 11.7" fill="none" stroke="#2e7888" stroke-width="0.7" stroke-dasharray="1.2 1"/></g></svg>
<div class="ab" style="left:854px;top:8px;width:1px;height:20px;background:#d9d7d3"></div>
<svg class="ab" style="left:865px;top:8px" width="21" height="22" viewBox="0 0 21 22"><g transform="translate(0.5,0.5)"><polygon points="0.3,5.6 12,8.2 12,20.2 0.3,16.5" fill="#1a8aa8"/><g fill="none" stroke="#2e7888" stroke-width="1.1" stroke-linejoin="round"><polygon points="0.3,5.6 8.1,-0.1 18,1.6 18.6,11.7 12,20.2 0.3,16.5"/><path d="M0.3 5.6L12 8.2L18 1.6M12 8.2V20.2"/></g><path d="M8.1 -0.1V10.5L0.3 16.5M8.1 10.5L18.6 11.7" fill="none" stroke="#2e7888" stroke-width="0.7" stroke-dasharray="1.2 1"/></g></svg>
<svg class="ab" style="left:896px;top:8px" width="21" height="22" viewBox="0 0 21 22"><g transform="translate(0.5,0.5)"><polygon points="0.3,5.6 8.1,-0.1 18,1.6 12,8.2" fill="#1a8aa8"/><g fill="none" stroke="#2e7888" stroke-width="1.1" stroke-linejoin="round"><polygon points="0.3,5.6 8.1,-0.1 18,1.6 18.6,11.7 12,20.2 0.3,16.5"/><path d="M0.3 5.6L12 8.2L18 1.6M12 8.2V20.2"/></g><path d="M8.1 -0.1V10.5L0.3 16.5M8.1 10.5L18.6 11.7" fill="none" stroke="#2e7888" stroke-width="0.7" stroke-dasharray="1.2 1"/></g></svg>
<svg class="ab" style="left:927px;top:8px" width="21" height="22" viewBox="0 0 21 22"><g transform="translate(0.5,0.5)"><polygon points="12,8.2 18,1.6 18.6,11.7 12,20.2" fill="#1a8aa8"/><g fill="none" stroke="#2e7888" stroke-width="1.1" stroke-linejoin="round"><polygon points="0.3,5.6 8.1,-0.1 18,1.6 18.6,11.7 12,20.2 0.3,16.5"/><path d="M0.3 5.6L12 8.2L18 1.6M12 8.2V20.2"/></g><path d="M8.1 -0.1V10.5L0.3 16.5M8.1 10.5L18.6 11.7" fill="none" stroke="#2e7888" stroke-width="0.7" stroke-dasharray="1.2 1"/></g></svg>
<div class="ab" style="left:956px;top:8px;width:1px;height:20px;background:#d9d7d3"></div>
<svg class="ab" style="left:967px;top:8px" width="21" height="22" viewBox="0 0 21 22"><g transform="translate(0.5,0.5)"><polygon points="8.1,-0.1 18,1.6 18.6,11.7 8.1,10.5" fill="#1a8aa8"/><g fill="none" stroke="#2e7888" stroke-width="1.1" stroke-linejoin="round"><polygon points="0.3,5.6 8.1,-0.1 18,1.6 18.6,11.7 12,20.2 0.3,16.5"/><path d="M0.3 5.6L12 8.2L18 1.6M12 8.2V20.2"/></g><path d="M8.1 -0.1V10.5L0.3 16.5M8.1 10.5L18.6 11.7" fill="none" stroke="#2e7888" stroke-width="0.7" stroke-dasharray="1.2 1"/></g></svg>
<svg class="ab" style="left:998px;top:8px" width="21" height="22" viewBox="0 0 21 22"><g transform="translate(0.5,0.5)"><polygon points="0.3,16.5 8.1,10.5 18.6,11.7 12,20.2" fill="#1a8aa8"/><g fill="none" stroke="#2e7888" stroke-width="1.1" stroke-linejoin="round"><polygon points="0.3,5.6 8.1,-0.1 18,1.6 18.6,11.7 12,20.2 0.3,16.5"/><path d="M0.3 5.6L12 8.2L18 1.6M12 8.2V20.2"/></g><path d="M8.1 -0.1V10.5L0.3 16.5M8.1 10.5L18.6 11.7" fill="none" stroke="#2e7888" stroke-width="0.7" stroke-dasharray="1.2 1"/></g></svg>
<svg class="ab" style="left:1029px;top:8px" width="21" height="22" viewBox="0 0 21 22"><g transform="translate(0.5,0.5)"><polygon points="0.3,5.6 8.1,-0.1 8.1,10.5 0.3,16.5" fill="#1a8aa8"/><g fill="none" stroke="#2e7888" stroke-width="1.1" stroke-linejoin="round"><polygon points="0.3,5.6 8.1,-0.1 18,1.6 18.6,11.7 12,20.2 0.3,16.5"/><path d="M0.3 5.6L12 8.2L18 1.6M12 8.2V20.2"/></g><path d="M8.1 -0.1V10.5L0.3 16.5M8.1 10.5L18.6 11.7" fill="none" stroke="#2e7888" stroke-width="0.7" stroke-dasharray="1.2 1"/></g></svg>
<div class="ab" style="left:1059px;top:8px;width:1px;height:20px;background:#d9d7d3"></div>
<svg class="ab" style="left:1070px;top:8px" width="22" height="22" viewBox="0 0 22 22"><path d="M0.5 5.5L5.5 0.5L19 14L14 19z" fill="#2a9ac8" stroke="#1a6a90" stroke-width="0.7"/><path d="M0.5 5.5L14 19L14 20.5L0 7z" fill="#333"/><path d="M7 4l-1.6 1.6M9 6l-2.4 2.4M11 8l-1.6 1.6M13 10l-2.4 2.4M15 12l-1.6 1.6" stroke="#15507a" stroke-width="0.8"/></svg>
<svg class="ab" style="left:7px;top:50px" width="5" height="9"><path d="M0 0.5h3M0 3h3M0 5.5h3" stroke="#d3d1cd" stroke-width="1"/></svg>
<div class="ab" style="left:14px;top:42px;width:70.5px;height:21px;border:1px solid #bcbab6;border-radius:3px;background:linear-gradient(#fefefe,#ebeae9)"></div>
<svg class="ab" style="left:28px;top:42px" width="20" height="20" viewBox="0 0 20 20"><path d="M4.2 5.8L13.8 2.8L13.5 12L4.2 17.2z" fill="#2ab4b8" stroke="#15606a" stroke-width="0.9"/><path d="M6.2 13.5L7.5 8L11.5 6.5L10.5 11.5z" fill="#fff" stroke="#111" stroke-width="0.8"/><path d="M2.5 7.5H4.5M2.5 12.5H4.5M13.5 6.5H15.5M13.5 11.5H15.5" stroke="#2a5a60" stroke-width="0.8"/><path d="M9 15.5L10 17M13 14V17" stroke="#9ab8c0" stroke-width="0.8"/></svg>
<div class="t" style="left:46.50px;top:46.82px;font-size:12.5px;line-height:12.5px;letter-spacing:-0.051px;font-weight:normal;color:#3c3b37;">Top</div>
<div class="ab" style="left:87px;top:42px;width:16.5px;height:21px;border:1px solid #bcbab6;border-radius:3px;background:linear-gradient(#fefefe,#ebeae9)"></div>
<svg class="ab" style="left:86px;top:42px" width="20" height="20" viewBox="0 0 20 20"><path d="M4 14.5Q2.2 13 4.2 11L9.5 7.2L11.8 10.6L6.5 14Q5 15.2 4 14.5z" fill="#10b0a8" stroke="#0a5a58" stroke-width="0.8"/><path d="M8.8 7.4L16.2 5.2L11.8 13.8z" fill="#c8f4ec" stroke="#2a7070" stroke-width="0.9" stroke-linejoin="round"/></svg>
<div class="ab" style="left:106px;top:42px;width:17px;height:21px;border:1px solid #bcbab6;border-radius:3px;background:linear-gradient(#fefefe,#ebeae9)"></div>
<div class="ab" style="left:108px;top:46px;width:13.5px;height:13px;background:#000"></div>
<div class="ab" style="left:125px;top:42px;width:17px;height:21px;border:1px solid #bcbab6;border-radius:3px;background:linear-gradient(#fefefe,#ebeae9)"></div>
<div class="ab" style="left:127px;top:46px;width:13.5px;height:13px;background:#a0a0a0"></div>
<div class="ab" style="left:144px;top:44px;width:40px;height:18px;border:1px solid #bdbbb7;border-radius:3px;background:linear-gradient(#f7f7f6,#e8e7e6)"></div>
<div class="ab" style="left:145px;top:45px;width:26px;height:16px;background:#fff;border-right:1px solid #e0dfdd"></div>
<div class="t" style="left:148.00px;top:47.52px;font-size:12.5px;line-height:12.5px;letter-spacing:-0.051px;font-weight:normal;color:#3c3b37;">2px</div>
<svg class="ab" style="left:174px;top:47px" width="8" height="12" viewBox="0 0 8 12"><path d="M1 3L3.5 0.8L6 3z" fill="#777"/><path d="M1 8.5L3.5 10.7L6 8.5z" fill="#777"/></svg>
<div class="ab" style="left:187px;top:44px;width:53px;height:18px;border:1px solid #bdbbb7;border-radius:3px;background:linear-gradient(#f7f7f6,#e8e7e6)"></div>
<div class="ab" style="left:188px;top:45px;width:39px;height:16px;background:#fff;border-right:1px solid #e0dfdd"></div>
<div class="t" style="left:191.00px;top:47.52px;font-size:12.5px;line-height:12.5px;letter-spacing:-0.207px;font-weight:normal;color:#3c3b37;">0,20</div>
<svg class="ab" style="left:230px;top:47px" width="8" height="12" viewBox="0 0 8 12"><path d="M1 3L3.5 0.8L6 3z" fill="#777"/><path d="M1 8.5L3.5 10.7L6 8.5z" fill="#777"/></svg>
<div class="ab" style="left:243px;top:42px;width:16.5px;height:21px;border:1px solid #bcbab6;border-radius:3px;background:linear-gradient(#fefefe,#ebeae9)"></div>
<svg class="ab" style="left:245px;top:46px" width="14" height="14" viewBox="0 0 14 14"><rect x="1" y="1" width="3.2" height="12" fill="#333"/><rect x="1.5" y="1.5" width="2.4" height="3.3" fill="#e02020"/><rect x="1.5" y="5" width="2.4" height="3.6" fill="#f0e020"/><rect x="1.5" y="8.8" width="2.4" height="3.7" fill="#20d020"/><path d="M4 5.5H8V3L12.8 7.5L8 12V9.5H4z" fill="#2a6ad0" stroke="#123a80" stroke-width="0.6"/></svg>
<svg class="ab" style="left:266px;top:50px" width="5" height="9"><path d="M0 0.5h3M0 3h3M0 5.5h3" stroke="#d3d1cd" stroke-width="1"/></svg>
<svg class="ab" style="left:276px;top:42px" width="22" height="22" viewBox="0 0 22 22"><path d="M4.5 16L18 4" stroke="#bbb" stroke-width="2.6"/><path d="M4.5 16L18 4" stroke="#eee" stroke-width="1"/><circle cx="4.8" cy="16.900000000000002" r="2.6" fill="#555" opacity="0.45"/><circle cx="4.3" cy="16.3" r="2.6" fill="#f0a010"/><circle cx="3.5" cy="15.5" r="1.1700000000000002" fill="#ffd860"/><circle cx="18.7" cy="4.6" r="2.6" fill="#555" opacity="0.45"/><circle cx="18.2" cy="4" r="2.6" fill="#f0a010"/><circle cx="17.4" cy="3.2" r="1.1700000000000002" fill="#ffd860"/></svg>
<svg class="ab" style="left:308px;top:42px" width="22" height="22" viewBox="0 0 22 22"><path d="M3 15.5L6.8 8.5L12.5 14.8L16.5 3.5" fill="none" stroke="#aaa" stroke-width="1.8"/><circle cx="3.5" cy="16.1" r="2.3" fill="#555" opacity="0.45"/><circle cx="3" cy="15.5" r="2.3" fill="#f0a010"/><circle cx="2.2" cy="14.7" r="1.035" fill="#ffd860"/><circle cx="7.3" cy="9.1" r="2.3" fill="#555" opacity="0.45"/><circle cx="6.8" cy="8.5" r="2.3" fill="#f0a010"/><circle cx="6.0" cy="7.7" r="1.035" fill="#ffd860"/><circle cx="13.0" cy="15.4" r="2.3" fill="#555" opacity="0.45"/><circle cx="12.5" cy="14.8" r="2.3" fill="#f0a010"/><circle cx="11.7" cy="14.0" r="1.035" fill="#ffd860"/><circle cx="17.0" cy="4.1" r="2.3" fill="#555" opacity="0.45"/><circle cx="16.5" cy="3.5" r="2.3" fill="#f0a010"/><circle cx="15.7" cy="2.7" r="1.035" fill="#ffd860"/></svg>
<svg class="ab" style="left:338px;top:42px" width="22" height="22" viewBox="0 0 22 22"><circle cx="10.5" cy="9.5" r="8" fill="none" stroke="#999" stroke-width="2.2"/><circle cx="10.5" cy="9.5" r="8" fill="none" stroke="#f4f4f4" stroke-width="0.8"/><circle cx="10.5" cy="10.6" r="2.4" fill="#555" opacity="0.45"/><circle cx="10" cy="10" r="2.4" fill="#f0a010"/><circle cx="9.2" cy="9.2" r="1.08" fill="#ffd860"/><circle cx="18.3" cy="10.9" r="2.4" fill="#555" opacity="0.45"/><circle cx="17.8" cy="10.3" r="2.4" fill="#f0a010"/><circle cx="17.0" cy="9.5" r="1.08" fill="#ffd860"/></svg>
<svg class="ab" style="left:370px;top:42px" width="22" height="22" viewBox="0 0 22 22"><path d="M3 3.5Q13 5 16.5 16" fill="none" stroke="#bbb" stroke-width="2.2"/><circle cx="3.5" cy="4.1" r="2.4" fill="#555" opacity="0.45"/><circle cx="3" cy="3.5" r="2.4" fill="#f0a010"/><circle cx="2.2" cy="2.7" r="1.08" fill="#ffd860"/><circle cx="3.5" cy="16.6" r="2.4" fill="#555" opacity="0.45"/><circle cx="3" cy="16" r="2.4" fill="#f0a010"/><circle cx="2.2" cy="15.2" r="1.08" fill="#ffd860"/><circle cx="17.0" cy="16.6" r="2.4" fill="#555" opacity="0.45"/><circle cx="16.5" cy="16" r="2.4" fill="#f0a010"/><circle cx="15.7" cy="15.2" r="1.08" fill="#ffd860"/></svg>
<svg class="ab" style="left:400px;top:42px" width="22" height="22" viewBox="0 0 22 22"><ellipse cx="10.5" cy="10.5" rx="9" ry="4.5" fill="none" stroke="#aaa" stroke-width="2"/><ellipse cx="10.5" cy="10.5" rx="9" ry="4.5" fill="none" stroke="#eee" stroke-width="0.7"/><circle cx="3.5" cy="16.8" r="2" fill="#555" opacity="0.45"/><circle cx="3" cy="16.2" r="2" fill="#f0a010"/><circle cx="2.2" cy="15.399999999999999" r="0.9" fill="#ffd860"/><circle cx="18.5" cy="5.6" r="2.4" fill="#555" opacity="0.45"/><circle cx="18" cy="5" r="2.4" fill="#f0a010"/><circle cx="17.2" cy="4.2" r="1.08" fill="#ffd860"/></svg>
<svg class="ab" style="left:432px;top:42px" width="22" height="22" viewBox="0 0 22 22"><path d="M1.5 4.5L12 1L18 9.5L9.5 17.5L2 13z" fill="none" stroke="#888" stroke-width="2.2"/><path d="M1.5 4.5L12 1L18 9.5L9.5 17.5L2 13z" fill="none" stroke="#eee" stroke-width="0.7"/><circle cx="9.5" cy="10.6" r="2.4" fill="#555" opacity="0.45"/><circle cx="9" cy="10" r="2.4" fill="#f0a010"/><circle cx="8.2" cy="9.2" r="1.08" fill="#ffd860"/><circle cx="16.5" cy="11.1" r="2.4" fill="#555" opacity="0.45"/><circle cx="16" cy="10.5" r="2.4" fill="#f0a010"/><circle cx="15.2" cy="9.7" r="1.08" fill="#ffd860"/></svg>
<svg class="ab" style="left:463px;top:42px" width="22" height="22" viewBox="0 0 22 22"><rect x="2.5" y="4" width="14.5" height="13" fill="none" stroke="#999" stroke-width="2.2"/><rect x="2.5" y="4" width="14.5" height="13" fill="none" stroke="#eee" stroke-width="0.7"/><circle cx="3.0" cy="16.6" r="2.4" fill="#555" opacity="0.45"/><circle cx="2.5" cy="16" r="2.4" fill="#f0a010"/><circle cx="1.7" cy="15.2" r="1.08" fill="#ffd860"/><circle cx="17.0" cy="4.6" r="2.4" fill="#555" opacity="0.45"/><circle cx="16.5" cy="4" r="2.4" fill="#f0a010"/><circle cx="15.7" cy="3.2" r="1.08" fill="#ffd860"/></svg>
<svg class="ab" style="left:494px;top:42px" width="22" height="22" viewBox="0 0 22 22"><path d="M1.5 17.5L10 2.5H15L17.5 17.5H13.5L13 14H8.2L6.3 17.5z M9.5 11H12.7L12 5.5z" fill="#f4e410" stroke="#333" stroke-width="0.9" fill-rule="evenodd"/></svg>
<svg class="ab" style="left:525px;top:42px" width="22" height="22" viewBox="0 0 22 22"><path d="M3 17V9.5M16 17V9.5M3 9.5H16" stroke="#666" stroke-width="1.6"/><text x="5" y="5" font-size="5" fill="#bbb" font-family="Liberation Sans">1.50</text><circle cx="3.5" cy="17.6" r="2.3" fill="#555" opacity="0.45"/><circle cx="3" cy="17" r="2.3" fill="#f0a010"/><circle cx="2.2" cy="16.2" r="1.035" fill="#ffd860"/><circle cx="16.8" cy="17.6" r="2.3" fill="#555" opacity="0.45"/><circle cx="16.3" cy="17" r="2.3" fill="#f0a010"/><circle cx="15.5" cy="16.2" r="1.035" fill="#ffd860"/><circle cx="10.0" cy="9.6" r="2.3" fill="#555" opacity="0.45"/><circle cx="9.5" cy="9" r="2.3" fill="#f0a010"/><circle cx="8.7" cy="8.2" r="1.035" fill="#ffd860"/><circle cx="3" cy="9.5" r="1.4" fill="#222"/><circle cx="16" cy="9.5" r="1.4" fill="#222"/></svg>
<svg class="ab" style="left:556px;top:42px" width="22" height="22" viewBox="0 0 22 22"><path d="M3.5 14Q4 3 9.8 4.5Q16 4 16 15" fill="none" stroke="#888" stroke-width="2.2"/><path d="M3.5 14Q4 3 9.8 4.5Q16 4 16 15" fill="none" stroke="#eee" stroke-width="0.7"/><circle cx="4.0" cy="14.1" r="2.4" fill="#555" opacity="0.45"/><circle cx="3.5" cy="13.5" r="2.4" fill="#f0a010"/><circle cx="2.7" cy="12.7" r="1.08" fill="#ffd860"/><circle cx="10.3" cy="5.1" r="2.4" fill="#555" opacity="0.45"/><circle cx="9.8" cy="4.5" r="2.4" fill="#f0a010"/><circle cx="9.0" cy="3.7" r="1.08" fill="#ffd860"/><circle cx="16.5" cy="15.6" r="2.4" fill="#555" opacity="0.45"/><circle cx="16" cy="15" r="2.4" fill="#f0a010"/><circle cx="15.2" cy="14.2" r="1.08" fill="#ffd860"/></svg>
<svg class="ab" style="left:587px;top:42px" width="22" height="22" viewBox="0 0 22 22"><circle cx="10" cy="11" r="4.2" fill="#555" opacity="0.3"/><circle cx="9.5" cy="10.5" r="4.2" fill="#f09010"/><circle cx="8.5" cy="9.3" r="1.8" fill="#ffd070"/></svg>
<svg class="ab" style="left:617px;top:42px" width="22" height="22" viewBox="0 0 22 22"><path d="M16 4.5Q15 1.5 10 1.5Q3.5 1.5 3.8 6.5Q4 9 9 10.2Q12.5 11 12 13Q11.5 15.5 8 15.5Q3.5 15.5 3 12.5L0.5 14.5Q2 18 8 18Q15 18 15 12.5Q15 9.5 10 8.5Q7 7.8 7.3 6Q7.6 4 10.5 4Q13 4 13.5 6z" fill="#e8d410" stroke="#333" stroke-width="0.8"/></svg>
<svg class="ab" style="left:645px;top:40px" width="26" height="26" viewBox="0 0 26 26"><defs><linearGradient id="gfb" x1="0" x2="1"><stop offset="0" stop-color="#f8a010"/><stop offset="1" stop-color="#fcc828"/></linearGradient></defs><path d="M5 9.5L14.5 4.2V20L11.5 22.2H5z" fill="#333" opacity="0.85"/><path d="M6 9.3L15.2 4.5L15.5 19L12.5 21.5H6z" fill="url(#gfb)" stroke="#222" stroke-width="0.7"/><path d="M15.2 4.5L16.2 3H23.2L16.3 7.3z" fill="#fbb420" stroke="#222" stroke-width="0.7"/><path d="M16.4 12.5L23 9.3V15.3L16.4 19z" fill="url(#gfb)" stroke="#222" stroke-width="0.7"/></svg>
<svg class="ab" style="left:680px;top:42px" width="22" height="22" viewBox="0 0 22 22"><path d="M5 15Q6 5 11 5Q16 5 17.5 15" fill="none" stroke="#666" stroke-width="2"/><path d="M5 15Q6 5 11 5Q16 5 17.5 15" fill="none" stroke="#eee" stroke-width="0.6"/><circle cx="6.0" cy="15.6" r="2.4" fill="#555" opacity="0.45"/><circle cx="5.5" cy="15" r="2.4" fill="#f0a010"/><circle cx="4.7" cy="14.2" r="1.08" fill="#ffd860"/><circle cx="19.0" cy="15.6" r="2.4" fill="#555" opacity="0.45"/><circle cx="18.5" cy="15" r="2.4" fill="#f0a010"/><circle cx="17.7" cy="14.2" r="1.08" fill="#ffd860"/><circle cx="5.5" cy="3.6" r="1.6" fill="#555" opacity="0.45"/><circle cx="5" cy="3" r="1.6" fill="#f0a010"/><circle cx="4.2" cy="2.2" r="0.7200000000000001" fill="#ffd860"/><circle cx="16.0" cy="3.6" r="1.6" fill="#555" opacity="0.45"/><circle cx="15.5" cy="3" r="1.6" fill="#f0a010"/><circle cx="14.7" cy="2.2" r="0.7200000000000001" fill="#ffd860"/></svg>
<svg class="ab" style="left:712px;top:50px" width="5" height="9"><path d="M0 0.5h3M0 3h3M0 5.5h3" stroke="#d3d1cd" stroke-width="1"/></svg>
<svg class="ab" style="left:722px;top:42px" width="22" height="22" viewBox="0 0 22 22"><path d="M10 1L14 5H11.5V8.5H15V6L19 10L15 14V11.5H11.5V15H14L10 19L6 15H8.5V11.5H5V14L1 10L5 6V8.5H8.5V5H6z" fill="#2a6ad8" stroke="#0a2a8a" stroke-width="0.7"/></svg>
<svg class="ab" style="left:750px;top:40px" width="26" height="26" viewBox="0 0 26 26"><path d="M6.4 12.5A6.4 6.4 0 1 0 15.5 6.8" fill="none" stroke="#0a1a60" stroke-width="3.6" stroke-linecap="round"/><path d="M6.4 12.5A6.4 6.4 0 1 0 15.5 6.8" fill="none" stroke="#2a6ae8" stroke-width="2.4" stroke-linecap="round"/><path d="M9.2 4.4L16.6 3.2L13.8 10.8z" fill="#2a6ae8" stroke="#0a1a60" stroke-width="0.7" stroke-linejoin="round"/></svg>
<svg class="ab" style="left:781px;top:40px" width="26" height="26" viewBox="0 0 26 26"><g fill="none" stroke-linecap="round" stroke-linejoin="round"><path d="M5 7.5L7.8 4.6H20V14.5Q20 19.5 12.5 20.5M9 11.5L10.8 9.6H14.5V13Q14.5 15 12.5 15.3" stroke="#0a1a70" stroke-width="3.2"/><path d="M5 7.5L7.8 4.6H20V14.5Q20 19.5 12.5 20.5M9 11.5L10.8 9.6H14.5V13Q14.5 15 12.5 15.3" stroke="#2a6ae0" stroke-width="1.8"/></g></svg>
<svg class="ab" style="left:815px;top:42px" width="22" height="22" viewBox="0 0 22 22"><path d="M1 10L6 5V8.5H9V2.5H11V8.5H14V5L19 10L14 15V11.5H11V17.5H9V11.5H6V15z" fill="#2a6ad8" stroke="#0a2a8a" stroke-width="0.6"/></svg>
<svg class="ab" style="left:846px;top:42px" width="22" height="22" viewBox="0 0 22 22"><path d="M10 1L19 10H14V19H6V10H1z" fill="#2a6ad8" stroke="#0a2a8a" stroke-width="0.7"/><path d="M10 2.5L4 9H7V18H9V9" fill="#5a9af0" opacity="0.7"/></svg>
<svg class="ab" style="left:877px;top:42px" width="22" height="22" viewBox="0 0 22 22"><path d="M10 19L19 10H14V1H6V10H1z" fill="#2a6ad8" stroke="#0a2a8a" stroke-width="0.7"/></svg>
<svg class="ab" style="left:908px;top:42px" width="22" height="22" viewBox="0 0 22 22"><rect x="1" y="10" width="8" height="8" fill="none" stroke="#0a2a8a" stroke-width="2.6"/><rect x="1" y="1" width="17" height="17" fill="none" stroke="#2a6ad8" stroke-width="1.6" stroke-dasharray="2 1.5"/><path d="M11 7L15 3.5L17 5.5L13 9z" fill="#2a6ad8" stroke="#0a2a8a" stroke-width="0.6"/></svg>
<svg class="ab" style="left:936px;top:40px" width="26" height="26" viewBox="0 0 26 26"><path d="M15.5 3.5L21 17L8 21z" fill="#0a14e8" stroke="#000" stroke-width="0.9" stroke-linejoin="round"/><path d="M15.5 4V16.5" stroke="#000" stroke-width="0.8"/><path d="M10.5 15.5Q13 14.5 14.8 16" fill="#f2f1f0" stroke="#f2f1f0" stroke-width="1.2"/><path d="M3.2 7.5L7.5 3.2L14.2 10L10 14.2z" fill="#4a8ae8" stroke="#111" stroke-width="0.8"/><path d="M6 6L12 12M7.5 4.8L13.2 10.6" stroke="#80b0f0" stroke-width="0.6"/></svg>
<svg class="ab" style="left:967px;top:40px" width="26" height="26" viewBox="0 0 26 26"><g fill="none" stroke-linecap="square"><path d="M4.3 9.2L9.8 4L14.3 9.3L20.5 5" stroke="#333" stroke-width="3.4"/><path d="M4.3 9.2L9.8 4L14.3 9.3L20.5 5" stroke="#f4f4f4" stroke-width="1.4"/><path d="M4.3 19Q7 15.5 10 16.5Q13.5 19 16 18.5Q19 18 20 15.5" stroke="#333" stroke-width="3.4"/><path d="M4.3 19Q7 15.5 10 16.5Q13.5 19 16 18.5Q19 18 20 15.5" stroke="#f4f4f4" stroke-width="1.4"/></g><path d="M8.8 11.8H15L12.2 15.5z" fill="#1a4ae0" stroke="#0a1a70" stroke-width="0.6"/></svg>
<svg class="ab" style="left:1001px;top:42px" width="22" height="22" viewBox="0 0 22 22"><path d="M1 16H18" stroke="#777" stroke-width="2.4"/><circle cx="9.7" cy="16" r="2.6" fill="#2a6ad8" stroke="#0a2a8a" stroke-width="0.5"/><path d="M9.7 3V11M5.8 7H13.6" stroke="#2a6ad8" stroke-width="2.8"/></svg>
<svg class="ab" style="left:1032px;top:42px" width="22" height="22" viewBox="0 0 22 22"><path d="M1 16H18" stroke="#777" stroke-width="2.4"/><circle cx="9.7" cy="16" r="2.6" fill="#2a6ad8" stroke="#0a2a8a" stroke-width="0.5"/><path d="M6 7H13.6" stroke="#0a2a8a" stroke-width="2.8"/></svg>
<svg class="ab" style="left:1063px;top:42px" width="22" height="22" viewBox="0 0 22 22"><path d="M2 17L9 20L19 16L11 13z" fill="#eee" stroke="#333" stroke-width="1.1"/><path d="M1 5.5L9 2.5L18 5V12L10 15.5L1 12.5z" fill="#2a6ee0" stroke="#0a2a90" stroke-width="0.8"/><path d="M1 5.5L10 8.5L18 5M10 8.5V15.5" fill="none" stroke="#0a2a90" stroke-width="0.7"/><path d="M1.5 5.5L9 2.8L17.5 5L10 8z" fill="#5a9af0"/></svg>
<svg class="ab" style="left:1094px;top:42px" width="22" height="22" viewBox="0 0 22 22"><path d="M1 4.5L7 1.5L12 4.5L7 7z M10 4L14 1.5L19 3.5L15 7z" fill="none" stroke="#2a2af0" stroke-width="1.1"/><path d="M1 15L7 12L12 15L7 18z M10 14.5L14 12L19 14L15 17.5z" fill="none" stroke="#f02020" stroke-width="1.1"/><path d="M6 6V13M14 13V5" stroke="#2a4ad0" stroke-width="1.8"/><path d="M4 8L6 5.5L8 8M12 11L14 13.5L16 11" fill="#2a4ad0"/></svg>
<svg class="ab" style="left:1125px;top:42px" width="22" height="22" viewBox="0 0 22 22"><rect x="1.5" y="2.5" width="3.5" height="6" rx="1" fill="#2a6ad8" stroke="#0a2a8a" stroke-width="0.6"/><rect x="8.0" y="2.5" width="3.5" height="6" rx="1" fill="#2a6ad8" stroke="#0a2a8a" stroke-width="0.6"/><rect x="14.5" y="2.5" width="3.5" height="6" rx="1" fill="#2a6ad8" stroke="#0a2a8a" stroke-width="0.6"/><rect x="1.5" y="10.5" width="3.5" height="6" rx="1" fill="#2a6ad8" stroke="#0a2a8a" stroke-width="0.6"/><rect x="8.0" y="10.5" width="3.5" height="6" rx="1" fill="#2a6ad8" stroke="#0a2a8a" stroke-width="0.6"/><rect x="14.5" y="10.5" width="3.5" height="6" rx="1" fill="#2a6ad8" stroke="#0a2a8a" stroke-width="0.6"/></svg>
<svg class="ab" style="left:1156px;top:42px" width="22" height="22" viewBox="0 0 22 22"><path d="M4 16Q6 8 10.5 8.5Q15 9 15 4" fill="none" stroke="#222" stroke-width="1.2"/><rect x="1" y="12" width="3.5" height="6" rx="0.6" fill="#2a6ad8" stroke="#0a2a8a" stroke-width="0.6"/><rect x="6.5" y="7" width="6" height="3.5" rx="0.6" fill="#2a6ad8" stroke="#0a2a8a" stroke-width="0.6"/><rect x="14" y="1" width="3.5" height="6" rx="0.6" fill="#2a6ad8" stroke="#0a2a8a" stroke-width="0.6"/></svg>
<svg class="ab" style="left:1184px;top:40px" width="26" height="26" viewBox="0 0 26 26"><defs><linearGradient id="gst" x1="0" y1="0" x2="0" y2="1"><stop offset="0" stop-color="#c0d8fc"/><stop offset="1" stop-color="#2a70e0"/></linearGradient></defs><path d="M5.8 8.5Q5.2 11.5 4 14Q3 16.5 4 19Q5.5 21.8 8.5 21.5Q10.5 21 13 20.8Q15.5 21 17.5 21.5Q20.8 21.8 22 19Q23 16.5 22 14Q20.8 11.5 20.2 8.5z" fill="url(#gst)" stroke="#222" stroke-width="0.9"/><path d="M5.8 8.5Q6 2.3 13 2.3Q20 2.3 20.2 8.5z" fill="#f8f8f8" stroke="#333" stroke-width="0.8"/><path d="M5.5 8.6H20.5" stroke="#111" stroke-width="1.3"/><ellipse cx="8.5" cy="10.3" rx="1.8" ry="1" fill="#111"/><ellipse cx="17.5" cy="10.3" rx="1.8" ry="1" fill="#111"/><path d="M8 16.3Q13 12 18 16.3" fill="none" stroke="#111" stroke-width="1.2"/><circle cx="8.8" cy="19" r="0.8" fill="#111"/><circle cx="17.2" cy="19" r="0.8" fill="#111"/><rect x="12" y="18" width="2" height="2.5" fill="#554"/></svg>
<svg class="ab" style="left:1218px;top:42px" width="22" height="22" viewBox="0 0 22 22"><rect x="8" y="4.5" width="11" height="12" fill="#ddd" stroke="#bbb" stroke-width="0.6"/><path d="M11 14L17 7" stroke="#9ab0e0" stroke-width="1"/><circle cx="14" cy="10.5" r="2.5" fill="none" stroke="#9ab0e0" stroke-width="0.8"/><path d="M1 6.5H6V3L11.5 8L6 13V9.5H1z" fill="#2a6ad8" stroke="#111" stroke-width="0.8"/></svg>
<svg class="ab" style="left:1249px;top:50px" width="5" height="9"><path d="M0 0.5h3M0 3h3M0 5.5h3" stroke="#d3d1cd" stroke-width="1"/></svg>
<div class="ab" style="left:1255.2px;top:42.3px;width:20.2px;height:20px;border:1px solid #b3b1ad;border-radius:3px;background:linear-gradient(#e8e7e5,#d6d5d3)"></div>
<svg class="ab" style="left:1255.4px;top:42.3px" width="20" height="20" viewBox="0 0 20 20"><g transform="translate(10.5 10.3) scale(0.86) translate(-10 -10)"><path d="M6.5 9V6.5Q6.5 3 10 3Q13.5 3 13.5 6.5V9" fill="none" stroke="#0b5a47" stroke-width="2.6"/><path d="M6.5 9V6.5Q6.5 3 10 3Q13.5 3 13.5 6.5V9" fill="none" stroke="#12b088" stroke-width="1.2"/><rect x="5.5" y="9" width="9" height="8.5" rx="0.8" fill="#12b088" stroke="#0b5a47" stroke-width="0.8"/></g></svg>
<div class="ab" style="left:1277.4px;top:42.3px;width:20.2px;height:20px;border:1px solid #b3b1ad;border-radius:3px;background:linear-gradient(#e8e7e5,#d6d5d3)"></div>
<svg class="ab" style="left:1277.6px;top:42.3px" width="20" height="20" viewBox="0 0 20 20"><g transform="translate(10.5 10.3) scale(0.86) translate(-10 -10)"><path d="M3.5 16.5L16.5 4" stroke="#0b5a47" stroke-width="3.2"/><path d="M3.5 16.5L16.5 4" stroke="#12b088" stroke-width="1.6"/><path d="M10 6.5L13.5 10L10 13.5L6.5 10z" fill="#12b088" stroke="#0b5a47" stroke-width="0.8"/></g></svg>
<div class="ab" style="left:1299.6px;top:42.3px;width:20.2px;height:20px;border:1px solid #b3b1ad;border-radius:3px;background:linear-gradient(#fefefe,#efeeed)"></div>
<svg class="ab" style="left:1299.8px;top:42.3px" width="20" height="20" viewBox="0 0 20 20"><g transform="translate(10.5 10.3) scale(0.86) translate(-10 -10)"><path d="M10 3.5V15.5M3.5 16.5H16.5" stroke="#0b5a47" stroke-width="3"/><path d="M10 3.5V15.5M3.5 16.5H16.5" stroke="#12b088" stroke-width="1.4"/></g></svg>
<div class="ab" style="left:1321.8px;top:42.3px;width:20.2px;height:20px;border:1px solid #b3b1ad;border-radius:3px;background:linear-gradient(#fefefe,#efeeed)"></div>
<svg class="ab" style="left:1322.0px;top:42.3px" width="20" height="20" viewBox="0 0 20 20"><g transform="translate(10.5 10.3) scale(0.86) translate(-10 -10)"><path d="M6.5 4v12M13.5 4v12M4 6.5h12M4 13.5h12" stroke="#0b5a47" stroke-width="3.4"/><path d="M6.5 4v12M13.5 4v12M4 6.5h12M4 13.5h12" stroke="#12b088" stroke-width="2"/><rect x="8" y="8" width="4" height="4" fill="#fff"/></g></svg>
<div class="ab" style="left:1344.0px;top:42.3px;width:20.2px;height:20px;border:1px solid #b3b1ad;border-radius:3px;background:linear-gradient(#fefefe,#efeeed)"></div>
<svg class="ab" style="left:1344.2px;top:42.3px" width="20" height="20" viewBox="0 0 20 20"><g transform="translate(10.5 10.3) scale(0.86) translate(-10 -10)"><path d="M4.5 4.5L15.5 15.5M15.5 4.5L4.5 15.5" stroke="#0b5a47" stroke-width="3.6"/><path d="M4.5 4.5L15.5 15.5M15.5 4.5L4.5 15.5" stroke="#12b088" stroke-width="2"/></g></svg>
<div class="ab" style="left:1366.2px;top:42.3px;width:20.2px;height:20px;border:1px solid #b3b1ad;border-radius:3px;background:linear-gradient(#fefefe,#efeeed)"></div>
<svg class="ab" style="left:1366.4px;top:42.3px" width="20" height="20" viewBox="0 0 20 20"><g transform="translate(10.5 10.3) scale(0.86) translate(-10 -10)"><path d="M4 5.5L16.5 12M3.5 9.5L16 16" stroke="#0b5a47" stroke-width="3"/><path d="M4 5.5L16.5 12M3.5 9.5L16 16" stroke="#12b088" stroke-width="1.4"/></g></svg>
<div class="ab" style="left:1388.4px;top:42.3px;width:20.2px;height:20px;border:1px solid #b3b1ad;border-radius:3px;background:linear-gradient(#e8e7e5,#d6d5d3)"></div>
<svg class="ab" style="left:1388.6px;top:42.3px" width="20" height="20" viewBox="0 0 20 20"><g transform="translate(10.5 10.3) scale(0.86) translate(-10 -10)"><path d="M5 15L16 5.5" stroke="#0b5a47" stroke-width="3"/><path d="M5 15L16 5.5" stroke="#12b088" stroke-width="1.4"/><circle cx="5" cy="15" r="2.6" fill="#12b088" stroke="#0b5a47" stroke-width="0.8"/></g></svg>
<div class="ab" style="left:1410.6px;top:42.3px;width:20.2px;height:20px;border:1px solid #b3b1ad;border-radius:3px;background:linear-gradient(#fefefe,#efeeed)"></div>
<svg class="ab" style="left:1410.8px;top:42.3px" width="20" height="20" viewBox="0 0 20 20"><g transform="translate(10.5 10.3) scale(0.86) translate(-10 -10)"><path d="M10 3.5L16.5 10L10 16.5L3.5 10z" fill="none" stroke="#0b5a47" stroke-width="2.6"/><path d="M10 3.5L16.5 10L10 16.5L3.5 10z" fill="none" stroke="#12b088" stroke-width="1.2"/><circle cx="10" cy="3.8" r="1.8" fill="#12b088" stroke="#0b5a47" stroke-width="0.6"/><circle cx="10" cy="16.2" r="1.8" fill="#12b088" stroke="#0b5a47" stroke-width="0.6"/><circle cx="3.8" cy="10" r="1.8" fill="#12b088" stroke="#0b5a47" stroke-width="0.6"/><circle cx="16.2" cy="10" r="1.8" fill="#12b088" stroke="#0b5a47" stroke-width="0.6"/></g></svg>
<div class="ab" style="left:1432.8px;top:42.3px;width:20.2px;height:20px;border:1px solid #b3b1ad;border-radius:3px;background:linear-gradient(#e8e7e5,#d6d5d3)"></div>
<svg class="ab" style="left:1433.0px;top:42.3px" width="20" height="20" viewBox="0 0 20 20"><g transform="translate(10.5 10.3) scale(0.86) translate(-10 -10)"><circle cx="10" cy="10" r="5.8" fill="none" stroke="#0b5a47" stroke-width="2.8"/><circle cx="10" cy="10" r="2.6" fill="none" stroke="#0b5a47" stroke-width="1.4"/></g></svg>
<div class="ab" style="left:1455.0px;top:42.3px;width:20.2px;height:20px;border:1px solid #b3b1ad;border-radius:3px;background:linear-gradient(#fefefe,#efeeed)"></div>
<svg class="ab" style="left:1455.2px;top:42.3px" width="20" height="20" viewBox="0 0 20 20"><g transform="translate(10.5 10.3) scale(0.86) translate(-10 -10)"><circle cx="5" cy="10" r="1.7" fill="#0b5a47"/><circle cx="10" cy="10" r="1.7" fill="#0b5a47"/><circle cx="15" cy="10" r="1.7" fill="#0b5a47"/></g></svg>
<div class="ab" style="left:1477.2px;top:42.3px;width:20.2px;height:20px;border:1px solid #b3b1ad;border-radius:3px;background:linear-gradient(#fefefe,#efeeed)"></div>
<svg class="ab" style="left:1477.4px;top:42.3px" width="20" height="20" viewBox="0 0 20 20"><g transform="translate(10.5 10.3) scale(0.86) translate(-10 -10)"><path d="M4 10L13 15.5" stroke="#0b5a47" stroke-width="3.2"/><path d="M4 10L13 15.5" stroke="#12b088" stroke-width="1.4"/><circle cx="12.5" cy="6" r="1.7" fill="#12b088" stroke="#0b5a47" stroke-width="0.6"/></g></svg>
<div class="ab" style="left:1499.4px;top:42.3px;width:20.2px;height:20px;border:1px solid #b3b1ad;border-radius:3px;background:linear-gradient(#e8e7e5,#d6d5d3)"></div>
<svg class="ab" style="left:1499.6px;top:42.3px" width="20" height="20" viewBox="0 0 20 20"><g transform="translate(10.5 10.3) scale(0.86) translate(-10 -10)"><path d="M10 4.5V15.5M4.5 10H15.5" stroke="#0b5a47" stroke-width="3"/><path d="M10 4.5V15.5M4.5 10H15.5" stroke="#12b088" stroke-width="1.2"/></g></svg>
<div class="ab" style="left:1521.6px;top:42.3px;width:20.2px;height:20px;border:1px solid #b3b1ad;border-radius:3px;background:linear-gradient(#fefefe,#efeeed)"></div>
<svg class="ab" style="left:1521.8px;top:42.3px" width="20" height="20" viewBox="0 0 20 20"><g transform="translate(10.5 10.3) scale(0.86) translate(-10 -10)"><path d="M6 9.5V15H9.5M9 8.5V16M12 7V10H14.5V7M13 4.5L15 4.5" stroke="#12b088" stroke-width="1.3" fill="none"/><path d="M5 12h3M11 5.5v-1.5" stroke="#0b5a47" stroke-width="0.8"/></g></svg>
<div class="ab" style="left:1543.8px;top:42.3px;width:20.2px;height:20px;border:1px solid #b3b1ad;border-radius:3px;background:linear-gradient(#fefefe,#efeeed)"></div>
<svg class="ab" style="left:1544.0px;top:42.3px" width="20" height="20" viewBox="0 0 20 20"><g transform="translate(10.5 10.3) scale(0.86) translate(-10 -10)"><rect x="4" y="4" width="12" height="12" rx="0.8" fill="#12b088" stroke="#0b5a47" stroke-width="0.9"/><circle cx="8" cy="12" r="1.2" fill="none" stroke="#0b5a47" stroke-width="0.7"/></g></svg>
</body></html>
